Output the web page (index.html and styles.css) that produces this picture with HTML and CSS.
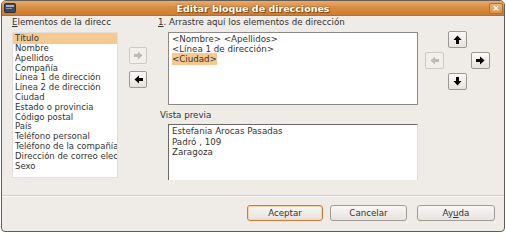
FILE: index.html
```html
<!DOCTYPE html>
<html lang="es">
<head>
<meta charset="utf-8">
<title>Editar bloque de direcciones</title>
<link rel="stylesheet" href="styles.css">
</head>
<body>
<div class="window">
  <div class="titlebar">
    <div class="tb-side">
      <svg class="appicon" width="12" height="10" viewBox="0 0 12 10">
        <rect x="0.5" y="0.5" width="11" height="9" rx="1" fill="#3d4a57" stroke="#2a333c"/>
        <rect x="2" y="2" width="8" height="2" fill="#9fb3c4"/>
        <rect x="2" y="5" width="6" height="1" fill="#7f93a4"/>
      </svg>
    </div>
    <div class="title">Editar bloque de direcciones</div>
    <div class="tb-side tb-right">
      <div class="close">×</div>
    </div>
  </div>
  <div class="content">
    <div class="main">
      <div class="leftcol">
        <div class="label"><u>E</u>lementos de la direcc</div>
        <div class="list">
          <div class="item sel">Título</div>
          <div class="item">Nombre</div>
          <div class="item">Apellidos</div>
          <div class="item">Compañía</div>
          <div class="item">Línea 1 de dirección</div>
          <div class="item">Línea 2 de dirección</div>
          <div class="item">Ciudad</div>
          <div class="item">Estado o provincia</div>
          <div class="item">Código postal</div>
          <div class="item">País</div>
          <div class="item">Teléfono personal</div>
          <div class="item">Teléfono de la compañía</div>
          <div class="item">Dirección de correo elec</div>
          <div class="item">Sexo</div>
        </div>
      </div>
      <div class="midcol">
        <div class="abtn dis">
          <svg width="11" height="9" viewBox="0 0 11 9"><polygon points="1,3 5,3 5,0.5 9.5,4.5 5,8.5 5,6 1,6"/></svg>
        </div>
        <div class="abtn">
          <svg width="11" height="9" viewBox="0 0 11 9"><polygon points="10,3 6,3 6,0.5 1.5,4.5 6,8.5 6,6 10,6"/></svg>
        </div>
      </div>
      <div class="rightcol">
        <div class="label"><u>1</u>. Arrastre aquí los elementos de dirección</div>
        <div class="addrbox">
          <div class="line">&lt;Nombre&gt; &lt;Apellidos&gt;</div>
          <div class="line">&lt;Línea 1 de dirección&gt;</div>
          <div class="line"><span class="hl">&lt;Ciudad&gt;</span></div>
        </div>
        <div class="label plabel">Vista previa</div>
        <div class="preview">
          <div class="pline">Estefania Arocas Pasadas</div>
          <div class="pline">Padró , 109</div>
          <div class="pline">Zaragoza</div>
        </div>
      </div>
      <div class="movepad">
        <div class="abtn up">
          <svg width="9" height="11" viewBox="0 0 9 11"><polygon points="3,10 3,6 0.5,6 4.5,1.5 8.5,6 6,6 6,10"/></svg>
        </div>
        <div class="abtn dis left">
          <svg width="11" height="9" viewBox="0 0 11 9"><polygon points="10,3 6,3 6,0.5 1.5,4.5 6,8.5 6,6 10,6"/></svg>
        </div>
        <div class="abtn right">
          <svg width="11" height="9" viewBox="0 0 11 9"><polygon points="1,3 5,3 5,0.5 9.5,4.5 5,8.5 5,6 1,6"/></svg>
        </div>
        <div class="abtn down">
          <svg width="9" height="11" viewBox="0 0 9 11"><polygon points="3,1 3,5 0.5,5 4.5,9.5 8.5,5 6,5 6,1"/></svg>
        </div>
      </div>
    </div>
    <div class="sep"></div>
    <div class="footer">
      <div class="btn default w76">Aceptar</div>
      <div class="btn w77">Cancelar</div>
      <div class="btn w78">Ay<u>u</u>da</div>
    </div>
  </div>
</div>
</body>
</html>
```

FILE: styles.css
```css
* { box-sizing: border-box; }
html, body { margin: 0; padding: 0; background: #ffffff; }
body {
  font-family: "DejaVu Sans", "Liberation Sans", sans-serif;
  font-size: 8.7px;
  color: #333333;
}
.window {
  margin-left: 1px;
  width: 504px;
  height: 232px;
  border: 1px solid #625d57;
  border-radius: 5px 5px 4px 4px;
  background: #efebe7;
  overflow: hidden;
  display: flex;
  flex-direction: column;
}
.titlebar {
  height: 15px;
  display: flex;
  align-items: center;
  background: linear-gradient(#ebab68, #da8d42 45%, #cc7c33);
  border-bottom: 1px solid #b86d2a;
}
.tb-side {
  width: 18px;
  height: 15px;
  display: flex;
  align-items: center;
  padding-left: 2px;
}
.tb-right { justify-content: flex-end; padding-left: 0; padding-right: 1px; }
.title {
  flex: 1;
  text-align: center;
  font-weight: bold;
  font-size: 9.5px;
  color: #ffffff;
  text-shadow: 0 0 2px #7a4512, 1px 1px 0 #8a5020;
  line-height: 15px;
}
.close {
  width: 14px;
  height: 11px;
  border: 1px solid #b0702f;
  border-radius: 2px;
  background: linear-gradient(#eab27a, #d9954f);
  color: #fff;
  font-size: 9px;
  line-height: 9px;
  text-align: center;
  font-weight: bold;
}
.content {
  flex: 1;
  display: flex;
  flex-direction: column;
}
.main {
  display: flex;
  padding-left: 10px;
  padding-top: 1px;
  height: 164px;
}
.label {
  height: 11px;
  line-height: 11px;
  white-space: nowrap;
}
.label u { text-decoration: underline; }
.leftcol { width: 106px; }
.list {
  margin-top: 4px;
  height: 146px;
  background: #ffffff;
  border: 1px solid #e2ded9;
  overflow: hidden;
}
.item {
  height: 9.8px;
  line-height: 9.8px;
  padding-left: 2px;
  font-size: 8.5px;
  white-space: nowrap;
  overflow: hidden;
}
.item.sel { background: #f5c98f; height: 11px; line-height: 11px; }
.midcol {
  width: 18px;
  margin-left: 11px;
  padding-top: 30px;
  display: flex;
  flex-direction: column;
  gap: 7px;
}
.abtn {
  width: 18px;
  height: 17px;
  border: 1px solid #9c9892;
  border-radius: 2px;
  background: linear-gradient(#fbfaf9, #e6e2dd);
  display: flex;
  align-items: center;
  justify-content: center;
}
.abtn svg { fill: #000000; display: block; }
.abtn.dis { border-color: #cdc9c4; background: #f1eeeb; }
.abtn.dis svg { fill: #bdb9b3; }
.rightcol {
  width: 260px;
  margin-left: 11px;
}
.addrbox {
  margin-top: 4px;
  margin-left: 10px;
  width: 250px;
  height: 73px;
  background: #ffffff;
  border: 1px solid #8d8a86;
  padding: 2px 3px;
}
.line {
  height: 9.8px;
  line-height: 9.8px;
  white-space: nowrap;
}
.hl { background: #f5c98f; padding: 1px 0; }
.plabel {
  margin-top: 5px;
  margin-left: 2px;
}
.preview {
  margin-top: 3px;
  margin-left: 10px;
  width: 250px;
  height: 56px;
  background: #ffffff;
  border-top: 1px solid #6c6965;
  border-left: 1px solid #6c6965;
  border-right: 1px solid #e0dcd7;
  padding: 1px 3px;
}
.pline {
  height: 10.5px;
  line-height: 10.5px;
  white-space: nowrap;
}
.movepad {
  margin-left: 7px;
  padding-top: 14px;
  display: grid;
  grid-template-columns: 19px 19px 19px;
  grid-template-rows: 17px 17px 17px;
  column-gap: 4px;
  row-gap: 4px;
  align-content: start;
}
.movepad .abtn { width: 19px; }
.movepad .up { grid-column: 2; grid-row: 1; }
.movepad .left { grid-column: 1; grid-row: 2; }
.movepad .right { grid-column: 3; grid-row: 2; }
.movepad .down { grid-column: 2; grid-row: 3; }
.sep {
  margin-top: 15px;
  height: 2px;
  border-top: 1px solid #d3cec8;
  border-bottom: 1px solid #fbfaf9;
}
.footer {
  margin-top: 8px;
  display: flex;
  justify-content: flex-end;
  padding-right: 9px;
}
.btn {
  height: 16px;
  line-height: 14px;
  text-align: center;
  border: 1px solid #a19c96;
  border-radius: 3px;
  background: linear-gradient(#f8f7f5, #e7e3de);
}
.btn.default { border-color: #d07b36; box-shadow: inset 0 0 0 1px #f3d2b0; }
.w76 { width: 76px; }
.w77 { width: 77px; margin-left: 7px; }
.w78 { width: 78px; margin-left: 10px; }
```
